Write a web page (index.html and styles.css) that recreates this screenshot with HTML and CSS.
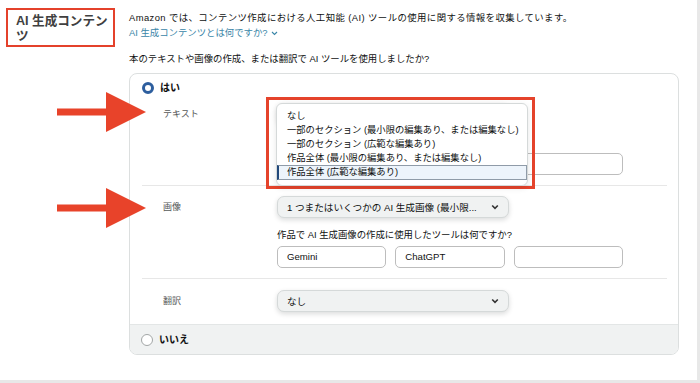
FILE: index.html
```html
<!DOCTYPE html>
<html lang="ja">
<head>
<meta charset="utf-8">
<title>AI 生成コンテンツ</title>
<link rel="stylesheet" href="styles.css">
</head>
<body>
<div class="panel">
  <h2 class="title">AI 生成コンテンツ</h2>
  <div class="main">
    <p class="intro">Amazon では、コンテンツ作成における人工知能 (AI) ツールの使用に関する情報を収集しています。</p>
    <a class="link" href="#">AI 生成コンテンツとは何ですか?<svg class="link-chev" width="7" height="5" viewBox="0 0 7 5"><path d="M1 1 L3.5 3.5 L6 1" fill="none" stroke="currentColor" stroke-width="1.1"/></svg></a>
    <p class="question">本のテキストや画像の作成、または翻訳で AI ツールを使用しましたか?</p>

    <div class="card">
      <div class="opt opt-yes"><span class="radio radio-on"></span><span class="opt-label">はい</span></div>
      <div class="rows">
        <div class="row row-first">
          <div class="row-label">テキスト</div>
          <div class="row-body">
            <div class="select"><span class="select-text"></span><svg class="chev" width="8" height="6" viewBox="0 0 8 6"><path d="M1.2 1.5 L4 4.3 L6.8 1.5" fill="none" stroke="#333" stroke-width="1.6"/></svg></div>
            <div class="sub-q">&nbsp;</div>
            <div class="inputs">
              <div class="input"></div>
              <div class="input"></div>
              <div class="input"></div>
            </div>
            <div class="annot">
              <ul class="listbox">
                <li>なし</li>
                <li>一部のセクション (最小限の編集あり、または編集なし)</li>
                <li>一部のセクション (広範な編集あり)</li>
                <li>作品全体 (最小限の編集あり、または編集なし)</li>
                <li class="active">作品全体 (広範な編集あり)</li>
              </ul>
            </div>
          </div>
        </div>
        <div class="row">
          <div class="row-label">画像</div>
          <div class="row-body">
            <div class="select"><span class="select-text">1 つまたはいくつかの AI 生成画像 (最小限...</span><svg class="chev" width="8" height="6" viewBox="0 0 8 6"><path d="M1.2 1.5 L4 4.3 L6.8 1.5" fill="none" stroke="#333" stroke-width="1.6"/></svg></div>
            <div class="sub-q">作品で AI 生成画像の作成に使用したツールは何ですか?</div>
            <div class="inputs">
              <div class="input">Gemini</div>
              <div class="input">ChatGPT</div>
              <div class="input"></div>
            </div>
          </div>
        </div>
        <div class="row row-last">
          <div class="row-label">翻訳</div>
          <div class="row-body">
            <div class="select"><span class="select-text">なし</span><svg class="chev" width="8" height="6" viewBox="0 0 8 6"><path d="M1.2 1.5 L4 4.3 L6.8 1.5" fill="none" stroke="#333" stroke-width="1.6"/></svg></div>
          </div>
        </div>
      </div>
      <div class="opt opt-no"><span class="radio"></span><span class="opt-label">いいえ</span></div>
    </div>
  </div>

  <svg class="arrow arrow-1" width="89" height="40" viewBox="0 0 89 40"><rect x="0" y="16.5" width="50" height="7" fill="#e8432a"/><polygon points="49,0 89,20 49,40" fill="#e8432a"/></svg>
  <svg class="arrow arrow-2" width="89" height="40" viewBox="0 0 89 40"><rect x="0" y="16.5" width="50" height="7" fill="#e8432a"/><polygon points="49,0 89,20 49,40" fill="#e8432a"/></svg>
</div>
</body>
</html>
```

FILE: styles.css
```css
* {
  box-sizing: border-box;
  margin: 0;
  padding: 0;
}

body {
  width: 700px;
  height: 383px;
  overflow: hidden;
  background: #e8e8e8;
  font-family: "Liberation Sans", "Noto Sans CJK JP", sans-serif;
  color: #0f1111;
}

.panel {
  position: relative;
  width: 697px;
  height: 380px;
  background: #fff;
  display: flex;
  align-items: flex-start;
  gap: 14px;
  padding: 8px 0 0 6px;
}

.title {
  flex: 0 0 109px;
  width: 109px;
  border: 2px solid #e4412b;
  padding: 4px 0 1px 8px;
  font-size: 12.6px;
  line-height: 15px;
  font-weight: bold;
  color: #404040;
}

.main {
  width: 550px;
  margin-top: 2px;
  font-size: 9.4px;
  line-height: 15px;
}

.intro {
  letter-spacing: 0.42px;
}

.link {
  display: flex;
  align-items: center;
  gap: 3px;
  color: #3a86a8;
  text-decoration: none;
}

.link-chev {
  margin-top: 2px;
}

.question {
  margin-top: 11px;
}

.card {
  margin-top: 7px;
  border: 1px solid #dcdfdf;
  border-radius: 8px;
  background: #fff;
}

.opt {
  display: flex;
  align-items: center;
  gap: 6px;
}

.opt-yes {
  padding: 7px 12px 0;
  line-height: 13px;
}

.opt-label {
  font-size: 10px;
  font-weight: bold;
  color: #0f1111;
}

.radio {
  width: 12px;
  height: 12px;
  border-radius: 50%;
  border: 1px solid #a2a6a6;
  background: #fff;
}

.radio-on {
  border: 3.5px solid #2d5e9e;
}

.rows {
  margin: 0 11px 0 12px;
}

.row {
  display: grid;
  grid-template-columns: 114px 346px;
  padding: 10px 0 10px 21px;
  border-bottom: 1px solid #e7e7e7;
}

.row-first {
  padding-top: 9px;
}

.row-last {
  padding-top: 11px;
  padding-bottom: 12px;
  border-bottom: none;
}

.row-label {
  font-size: 9px;
  line-height: 22px;
  color: #565959;
}

.row-body {
  position: relative;
}

.select {
  width: 232px;
  height: 22px;
  display: flex;
  align-items: center;
  justify-content: space-between;
  padding: 0 9px;
  background: #f0f2f2;
  border: 1px solid #d5d9d9;
  border-radius: 7px;
  box-shadow: 0 2px 5px rgba(15, 17, 17, 0.15);
  font-size: 9.6px;
  color: #0f1111;
}

.select-text {
  white-space: nowrap;
  overflow: hidden;
}

.sub-q {
  margin-top: 9px;
  font-size: 9.4px;
  line-height: 15px;
}

.inputs {
  margin-top: 4px;
  display: grid;
  grid-template-columns: repeat(3, 1fr);
  gap: 9px;
}

.input {
  height: 22px;
  border: 1px solid #bdbdbd;
  border-radius: 5px;
  padding-left: 9px;
  font-size: 9.6px;
  line-height: 20px;
  color: #0f1111;
}

.annot {
  position: absolute;
  left: -11px;
  top: -6px;
  border: 3px solid #e5432b;
  padding: 3px 4px 0 7px;
}

.listbox {
  width: 252px;
  list-style: none;
  background: #fff;
  border: 1px solid #d5d9d9;
  border-radius: 6px;
  padding: 5px 0;
  box-shadow: 0 2px 6px rgba(0, 0, 0, 0.1);
  font-size: 9.3px;
  line-height: 14px;
  color: #0f1111;
}

.listbox li {
  padding-left: 10px;
  white-space: nowrap;
}

.listbox li.active {
  background: #edf4fb;
  border: 1px solid #8f9ba8;
  border-left: 2px solid #21487a;
  padding-left: 8px;
  line-height: 13px;
}

.opt-no {
  height: 30px;
  padding-left: 11px;
  background: #f0f2f2;
  border-top: 1px solid #e3e6e6;
  border-radius: 0 0 7px 7px;
}

.arrow {
  position: absolute;
  left: 57px;
}

.arrow-1 {
  top: 92px;
}

.arrow-2 {
  top: 188px;
}
```
